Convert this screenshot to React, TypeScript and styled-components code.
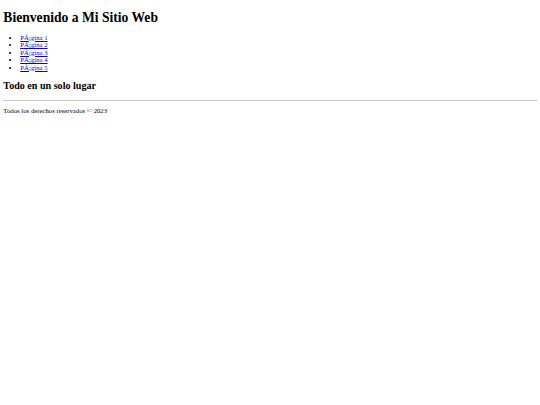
import styled, { createGlobalStyle } from "styled-components";

const GlobalStyle = createGlobalStyle`
  html, body {
    background: #ffffff;
  }
  body {
    margin: 3.36px;
    font-family: "Liberation Serif", "Times New Roman", serif;
    font-size: 6.72px;
    color: #000000;
  }
`;

const Title = styled.h1`
  font-size: 13.6px;
  font-weight: bold;
  margin: 6.4px 0 8px;
`;

const NavList = styled.ul`
  list-style: disc;
  margin: 6.72px 0;
  padding-left: 16.8px;
  font-size: 6.72px;
  line-height: 7.5px;
`;

const NavLink = styled.a`
  color: #0000ee;
  text-decoration: underline;
`;

const Subtitle = styled.h2`
  font-size: 10.08px;
  font-weight: bold;
  margin: 8.5px 0 9px;
`;

const Divider = styled.hr`
  margin: 3.36px 0;
  border: none;
  border-top: 1px solid #c8c8c8;
  height: 0;
`;

const Footer = styled.footer`
  font-size: 6.72px;
`;

const FooterText = styled.p`
  margin: 6.4px 0;
`;

const pages = [1, 2, 3, 4, 5];

export default function App() {
  return (
    <>
      <GlobalStyle />
      <header>
        <Title>Bienvenido a Mi Sitio Web</Title>
        <nav>
          <NavList>
            {pages.map((n) => (
              <li key={n}>
                <NavLink href={`#pagina${n}`}>PÃ¡gina {n}</NavLink>
              </li>
            ))}
          </NavList>
        </nav>
      </header>
      <main>
        <Subtitle>Todo en un solo lugar</Subtitle>
      </main>
      <Divider />
      <Footer>
        <FooterText>Todos los derechos reservados © 2023</FooterText>
      </Footer>
    </>
  );
}
